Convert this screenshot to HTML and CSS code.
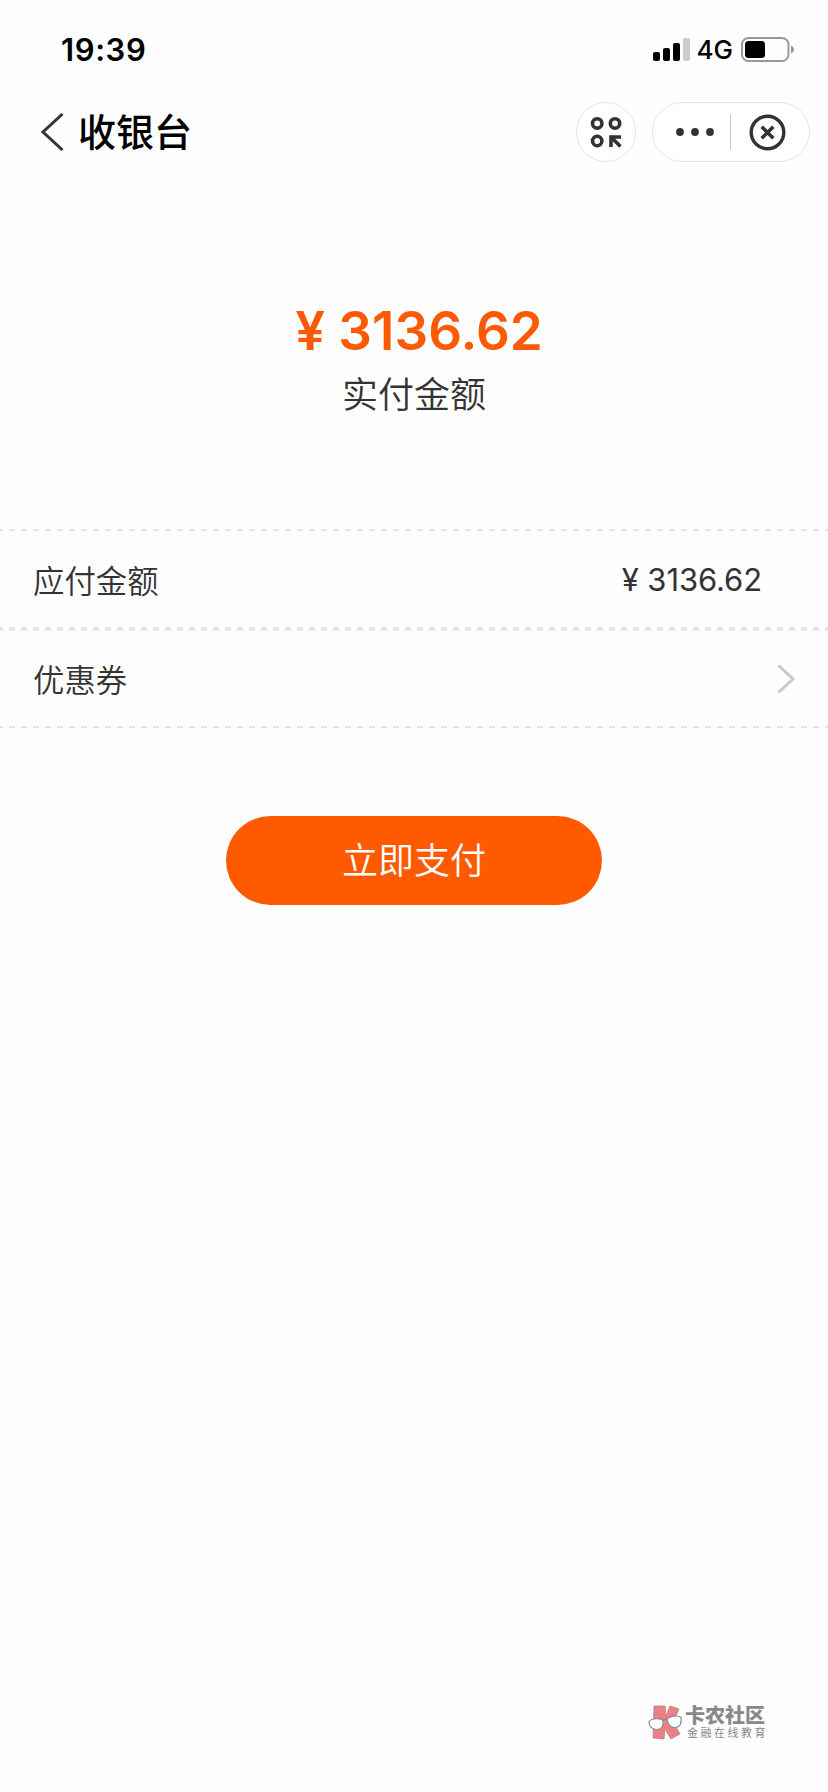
FILE: index.html
```
<!DOCTYPE html>
<html lang="zh-CN">
    <head>
        <meta charset="utf-8">
        <meta name="viewport" content="width=device-width,initial-scale=1.0">

        <title>收银台</title>

        <link rel="stylesheet" href="styles.css">
    </head>
    <body>
        <div class="status-bar">
            <span class="time">19:39</span>
            <div class="status-icons">
                <svg class="signal" width="37" height="23" viewBox="0 0 37 23">
                    <rect x="0" y="14" width="7" height="9" rx="2"/>
                    <rect x="10" y="10" width="7" height="13" rx="2"/>
                    <rect x="20" y="5" width="7" height="18" rx="2"/>
                    <rect x="30" y="0" width="7" height="23" rx="2" fill="#ccc"/>
                </svg>
                <span class="network">4G</span>
                <svg class="battery" width="53" height="25" viewBox="0 0 53 25">
                    <rect x="1" y="1" width="46.5" height="23" rx="6.5" fill="none" stroke="#999" stroke-width="2"/>
                    <rect x="4" y="4" width="20" height="17" rx="3.5"/>
                    <path d="M50 8.5c4 1.5 4 6.5 0 8z" fill="#999"/>
                </svg>
            </div>
        </div>

        <header class="nav-bar">
            <svg class="back" width="24" height="38" viewBox="0 0 24 38" fill="none" stroke="#333" stroke-width="3">
                <path d="M22.5 1L3 19l19.5 18"/>
            </svg>
            <h1 class="title">收银台</h1>
            <div class="round-button">
                <svg width="32" height="32" viewBox="0 0 32 32" fill="none" stroke="#333" stroke-width="3.6">
                    <circle cx="7.2" cy="7.4" r="4.7"/>
                    <circle cx="25" cy="7.4" r="4.7"/>
                    <circle cx="7.2" cy="25" r="4.7"/>
                    <path d="M21 31V21h10M21 21l9.5 9.5"/>
                </svg>
            </div>
            <div class="capsule">
                <svg class="more" width="40" height="8" viewBox="0 0 40 8" fill="#333">
                    <circle cx="5" cy="4" r="3.9"/>
                    <circle cx="20" cy="4" r="3.9"/>
                    <circle cx="35" cy="4" r="3.9"/>
                </svg>
                <span class="divider"></span>
                <svg class="close" width="37" height="37" viewBox="0 0 37 37" fill="none" stroke="#333">
                    <circle cx="18.5" cy="18.5" r="16.3" stroke-width="3.4"/>
                    <path d="M12.7 12.7l11.6 11.6M24.3 12.7L12.7 24.3" stroke-width="3.6"/>
                </svg>
            </div>
        </header>

        <div class="summary">
            <div class="amount">¥ 3136.62</div>
            <div class="amount-label">实付金额</div>
        </div>

        <div class="cells">
            <div class="cell">
                <span>应付金额</span>
                <span class="value">¥ 3136.62</span>
            </div>
            <div class="cell">
                <span>优惠券</span>
                <svg class="arrow" width="18" height="30" viewBox="0 0 18 30" fill="none" stroke="#c8c8cd" stroke-width="3">
                    <path d="M1.5 1.5L16 15 1.5 28.5"/>
                </svg>
            </div>
        </div>

        <button type="button" class="pay-button">立即支付</button>

        <div class="watermark">
            <svg width="35" height="35" viewBox="0 0 35 35">
                <path d="M6 1h11l1 10 4-10 9 3-6 13 7 12-9 5-6-10-1 10-11-1z" fill="#ec7f88" stroke="#a88" stroke-width=".8"/>
                <path d="M1 16.5c2-3 12-4 14-1 1 6-2 9-6 9-5 0-8-3-8-8zM19 14.5c2-3 11-5 14-2 1 6-1 10-6 10-4 0-7-3-8-8z" fill="#fff" stroke="#888" stroke-width="1.2"/>
                <path d="M15 15.5q2-2 4-1" fill="none" stroke="#888" stroke-width="1.2"/>
            </svg>
            <div class="watermark-text">
                <div class="watermark-name">卡农社区</div>
                <div class="watermark-slogan">金融在线教育</div>
            </div>
        </div>
    </body>
</html>
```

FILE: styles.css
```
html, body {
    margin: 0;
    padding: 0;
}

body {
    display: flex;
    flex-direction: column;
    box-sizing: border-box;
    height: 1792px;
    font-family: "Inter", "Noto Sans CJK SC", sans-serif;
    color: #333;
    background-color: #fefefe;
}

svg {
    display: block;
    flex: none;
}

.status-bar {
    display: flex;
    align-items: center;
    justify-content: space-between;
    height: 99px;
    padding: 0 34px 0 61px;
    color: #000;
}

.time {
    font-size: 31px;
    font-weight: 600;
    letter-spacing: 0.6px;
}

.status-icons {
    display: flex;
    align-items: center;
}

.network {
    margin: 0 8px 0 7px;
    font-size: 26px;
    font-weight: 450;
}

.nav-bar {
    display: flex;
    align-items: center;
    height: 66px;
    padding: 0 18px 0 40px;
}

.title {
    flex: 1;
    margin: 0 0 0 14px;
    font-size: 38px;
    font-weight: 500;
    line-height: 60px;
    color: #000;
}

.round-button,
.capsule {
    display: flex;
    align-items: center;
    box-sizing: border-box;
    height: 60px;
    border: 1px solid #e5e5e5;
    border-radius: 30px;
    background-color: #fff;
}

.round-button {
    justify-content: center;
    width: 60px;
    margin-right: 16px;
}

.capsule {
    width: 158px;
    padding-left: 22px;
}

.divider {
    width: 1px;
    height: 36px;
    margin: 0 18px 0 15px;
    background-color: #ccc;
}

.summary {
    padding-top: 131px;
    text-align: center;
}

.amount {
    padding-left: 10px;
    font-size: 53px;
    font-weight: 600;
    line-height: 70px;
    color: #fe5a05;
}

.amount-label {
    font-size: 36px;
    font-weight: 350;
    line-height: 58px;
}

.cells {
    margin-top: 105px;
}

.cell {
    display: flex;
    align-items: center;
    justify-content: space-between;
    box-sizing: border-box;
    height: 99px;
    padding: 0 33px;
    font-size: 31.4px;
    font-weight: 350;
    /* dashed lines on the top and bottom edge of the row */
    background:
        repeating-linear-gradient(90deg, #e5e5e5 0 3px, transparent 3px 9px, #e5e5e5 9px 12px) top / 100% 2px no-repeat,
        repeating-linear-gradient(90deg, #e5e5e5 0 3px, transparent 3px 9px, #e5e5e5 9px 12px) bottom / 100% 2px no-repeat;
}

.cell:first-child {
    height: 100px;
}

.value {
    margin-right: 33px;
    padding-top: 1px;
    font-size: 31px;
    font-weight: 400;
    letter-spacing: -0.1px;
}

.pay-button {
    align-self: center;
    width: 376px;
    height: 89px;
    margin-top: 88px;
    border: none;
    border-radius: 45px;
    padding: 0 0 6px;
    font-family: inherit;
    font-size: 36px;
    font-weight: 350;
    color: #fff;
    background-color: #ff5a00;
}

.watermark {
    display: flex;
    align-items: center;
    align-self: flex-end;
    gap: 2px;
    margin: auto 60px 52px 0;
    color: #888;
}

.watermark-name {
    font-size: 20px;
    font-weight: 900;
    line-height: 20px;
}

.watermark-slogan {
    padding-left: 2px;
    font-size: 11px;
    line-height: 14px;
    letter-spacing: 2.5px;
}
```
